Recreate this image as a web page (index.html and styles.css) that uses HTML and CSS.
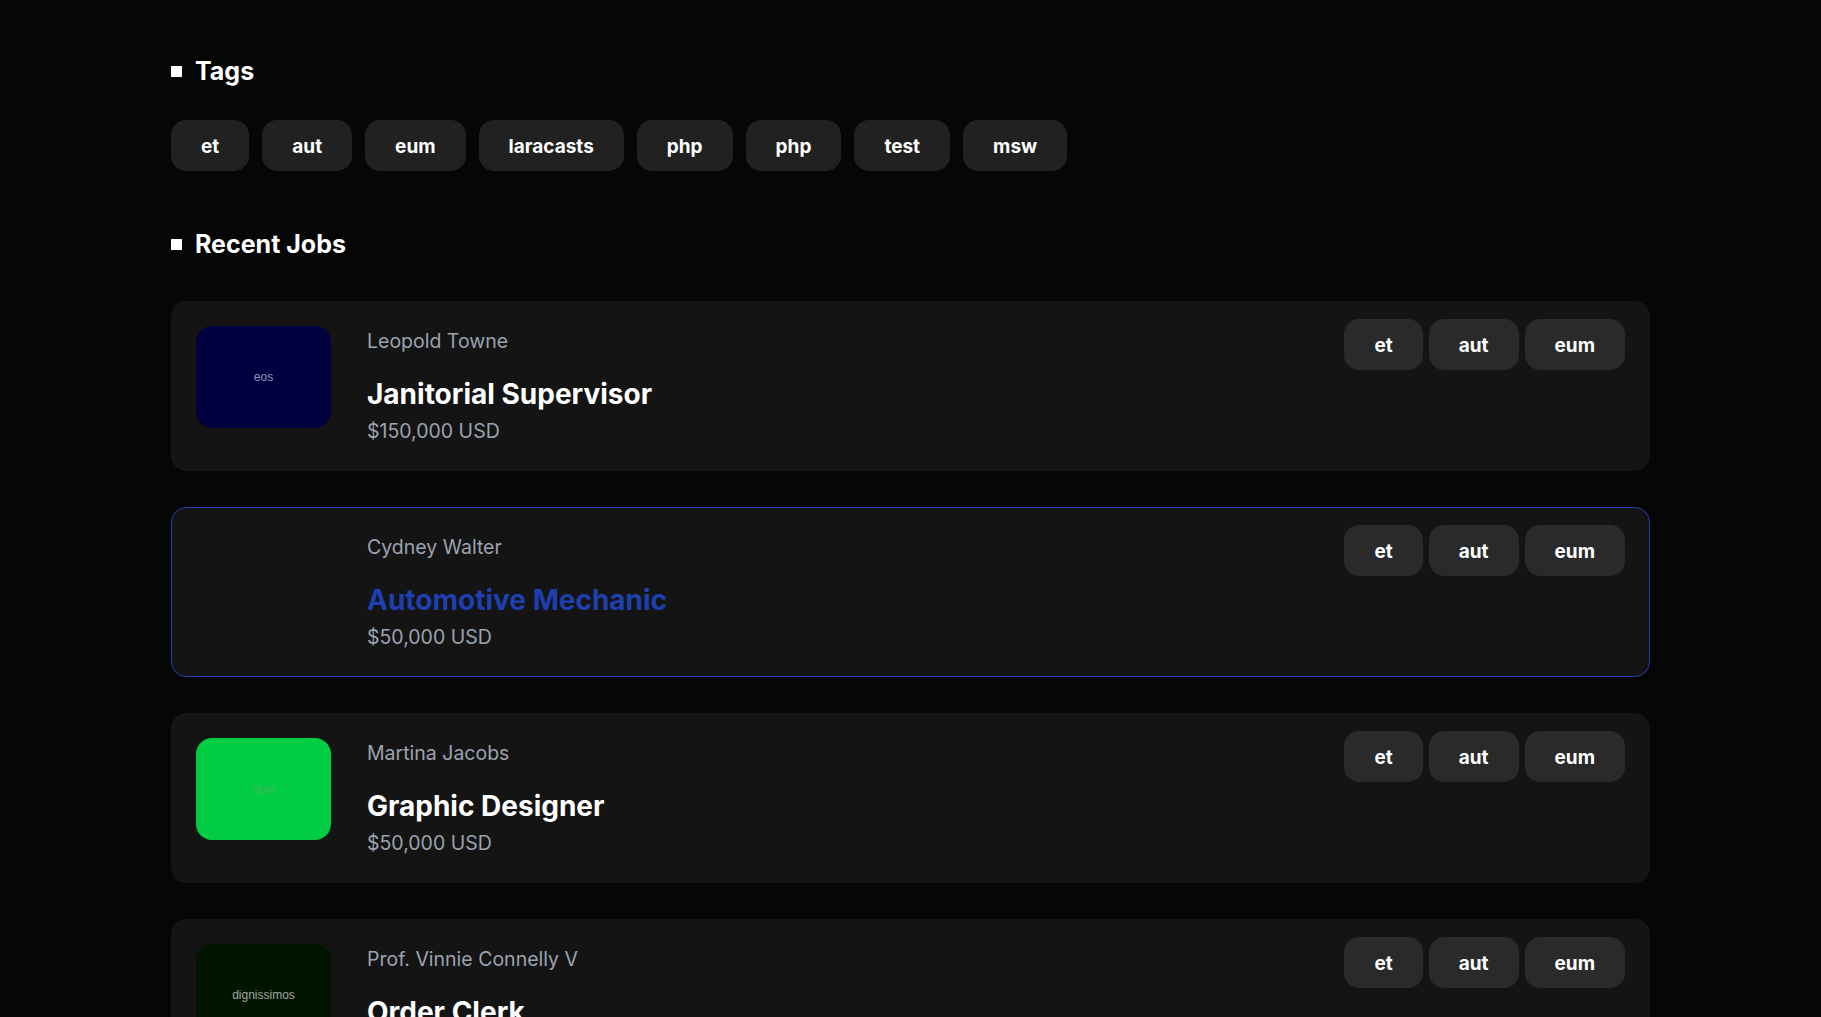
FILE: index.html
```html
<!DOCTYPE html>
<html lang="en">
<head>
<meta charset="utf-8">
<title>Jobs</title>
<link rel="stylesheet" href="styles.css">
</head>
<body>
<main class="page">
  <section class="section">
    <h2 class="section-heading"><span class="square"></span>Tags</h2>
    <div class="tag-list">
      <a class="tag">et</a>
      <a class="tag">aut</a>
      <a class="tag">eum</a>
      <a class="tag">laracasts</a>
      <a class="tag">php</a>
      <a class="tag">php</a>
      <a class="tag">test</a>
      <a class="tag">msw</a>
    </div>
  </section>

  <section class="section section-jobs">
    <h2 class="section-heading"><span class="square"></span>Recent Jobs</h2>
    <div class="job-list">
      <div class="job-card">
        <div class="logo logo-navy">eos</div>
        <div class="job-info">
          <a class="employer">Leopold Towne</a>
          <h3 class="job-title">Janitorial Supervisor</h3>
          <p class="salary">$150,000 USD</p>
        </div>
        <div class="job-tags">
          <a class="tag tag-card">et</a>
          <a class="tag tag-card">aut</a>
          <a class="tag tag-card">eum</a>
        </div>
      </div>

      <div class="job-card job-card-active">
        <div class="logo logo-empty"></div>
        <div class="job-info">
          <a class="employer">Cydney Walter</a>
          <h3 class="job-title">Automotive Mechanic</h3>
          <p class="salary">$50,000 USD</p>
        </div>
        <div class="job-tags">
          <a class="tag tag-card">et</a>
          <a class="tag tag-card">aut</a>
          <a class="tag tag-card">eum</a>
        </div>
      </div>

      <div class="job-card">
        <div class="logo logo-green">quia</div>
        <div class="job-info">
          <a class="employer">Martina Jacobs</a>
          <h3 class="job-title">Graphic Designer</h3>
          <p class="salary">$50,000 USD</p>
        </div>
        <div class="job-tags">
          <a class="tag tag-card">et</a>
          <a class="tag tag-card">aut</a>
          <a class="tag tag-card">eum</a>
        </div>
      </div>

      <div class="job-card">
        <div class="logo logo-darkgreen">dignissimos</div>
        <div class="job-info">
          <a class="employer">Prof. Vinnie Connelly V</a>
          <h3 class="job-title">Order Clerk</h3>
          <p class="salary">$50,000 USD</p>
        </div>
        <div class="job-tags">
          <a class="tag tag-card">et</a>
          <a class="tag tag-card">aut</a>
          <a class="tag tag-card">eum</a>
        </div>
      </div>
    </div>
  </section>
</main>
</body>
</html>
```
FILE: styles.css
```css
html {
  overflow: hidden;
}

body {
  margin: 0;
  background: #060606;
  color: #ffffff;
  font-family: "Inter", "Noto Sans", sans-serif;
}

.page {
  width: 1479px;
  margin: 0 auto;
  padding-top: 56px;
}

.section-jobs {
  margin-top: 58px;
}

.section-heading {
  display: flex;
  align-items: center;
  gap: 13px;
  margin: 0;
  font-size: 25px;
  line-height: 30px;
  font-weight: 700;
}

.square {
  width: 11px;
  height: 11px;
  background: #ffffff;
  flex: none;
}

.tag-list {
  display: flex;
  gap: 13px;
  margin-top: 34px;
}

.tag {
  display: flex;
  align-items: center;
  justify-content: center;
  height: 51px;
  padding: 1px 30px 0;
  box-sizing: border-box;
  border-radius: 15px;
  background: #212121;
  color: #ffffff;
  font-size: 19px;
  font-weight: 700;
  line-height: 23px;
}

.tag-card {
  background: #2a2a2a;
}

.job-list {
  display: flex;
  flex-direction: column;
  gap: 36px;
  margin-top: 42px;
}

.job-card {
  display: flex;
  gap: 36px;
  padding: 24px;
  border: 1px solid transparent;
  border-radius: 15px;
  background: #141414;
}

.job-card-active {
  border-color: #1e40af;
}

.logo {
  flex: none;
  width: 135px;
  height: 102px;
  border-radius: 16px;
  display: flex;
  align-items: center;
  justify-content: center;
  font-family: "Liberation Sans", Arial, sans-serif;
  font-size: 12px;
}

.logo-navy {
  background: #000040;
  color: #9494b4;
}

.logo-empty {
  background: transparent;
}

.logo-green {
  background: #00cc44;
  color: #43b862;
}

.logo-darkgreen {
  background: #001400;
  color: #a3a8a3;
}

.job-info {
  flex: 1;
  display: flex;
  flex-direction: column;
  align-items: flex-start;
}

.employer {
  font-size: 19.5px;
  line-height: 30px;
  color: #9ca3af;
}

.job-title {
  margin: 21px 0 0;
  font-size: 28px;
  line-height: 34px;
  font-weight: 700;
  color: #ffffff;
}

.job-card-active .job-title {
  color: #1e40af;
}

.salary {
  margin: 5px 0 0;
  font-size: 19.5px;
  line-height: 30px;
  color: #9ca3af;
}

.job-tags {
  display: flex;
  gap: 6px;
  align-self: flex-start;
  margin-top: -7px;
}
```
